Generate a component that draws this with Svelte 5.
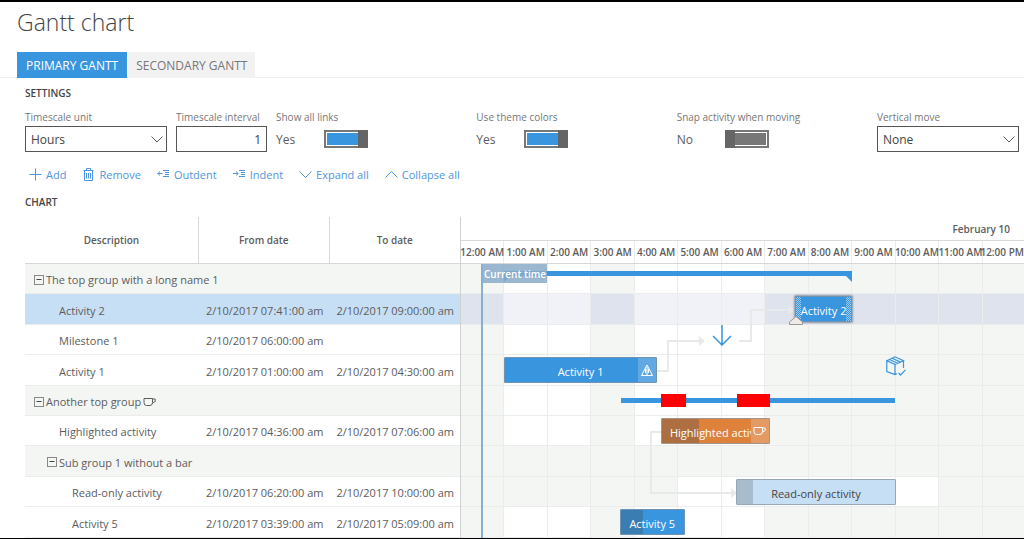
<script lang="ts">
  interface Row {
    name: string;
    level: number;
    group?: boolean;
    selected?: boolean;
    cup?: boolean;
    from?: string;
    to?: string;
    // working hours of the row, as [start, end] pairs
    open: number[][];
  }

  interface Bar {
    row: number;
    from: number;
    to: number;
    label: string;
    kind?: string;
    progress?: number;
    icon?: string;
    selected?: boolean;
  }

  const VISIBLE_HOURS = 12.95;
  const ROW_HEIGHT = 30.4;
  const normal = [[1, 3], [4, 7]];

  const rows: Row[] = [
    { name: 'The top group with a long name 1', level: 0, group: true, open: normal },
    { name: 'Activity 2', level: 1, selected: true, from: '2/10/2017 07:41:00 am', to: '2/10/2017 09:00:00 am', open: normal },
    { name: 'Milestone 1', level: 1, from: '2/10/2017 06:00:00 am', open: normal },
    { name: 'Activity 1', level: 1, from: '2/10/2017 01:00:00 am', to: '2/10/2017 04:30:00 am', open: normal },
    { name: 'Another top group', level: 0, group: true, cup: true, open: normal },
    { name: 'Highlighted activity', level: 1, from: '2/10/2017 04:36:00 am', to: '2/10/2017 07:06:00 am', open: normal },
    { name: 'Sub group 1 without a bar', level: 1, group: true, open: [] },
    { name: 'Read-only activity', level: 2, from: '2/10/2017 06:20:00 am', to: '2/10/2017 10:00:00 am', open: [[5, 11]] },
    { name: 'Activity 5', level: 2, from: '2/10/2017 03:39:00 am', to: '2/10/2017 05:09:00 am', open: normal }
  ];

  const bars: Bar[] = [
    { row: 1, from: 7.68, to: 9, label: 'Activity 2', selected: true },
    { row: 3, from: 1, to: 4.5, label: 'Activity 1', icon: 'warning' },
    { row: 5, from: 4.6, to: 7.1, label: 'Highlighted activity', kind: 'highlighted', progress: 35, icon: 'cup' },
    { row: 7, from: 6.33, to: 10, label: 'Read-only activity', kind: 'readonly', progress: 10 },
    { row: 8, from: 3.65, to: 5.15, label: 'Activity 5', progress: 35 }
  ];

  const hours = [
    '12:00 AM', '1:00 AM', '2:00 AM', '3:00 AM', '4:00 AM', '5:00 AM', '6:00 AM',
    '7:00 AM', '8:00 AM', '9:00 AM', '10:00 AM', '11:00 AM', '12:00 PM'
  ];

  const actions = [
    { icon: 'add', label: 'Add' },
    { icon: 'remove', label: 'Remove' },
    { icon: 'outdent', label: 'Outdent' },
    { icon: 'indent', label: 'Indent' },
    { icon: 'down', label: 'Expand all' },
    { icon: 'up', label: 'Collapse all' }
  ];

  let unit = $state('Hours');
  let interval = $state('1');
  let showLinks = $state(true);
  let themeColors = $state(true);
  let snap = $state(false);
  let verticalMove = $state('None');

  const rowTop = (i: number) => Math.round(i * ROW_HEIGHT);
  const rowHeight = (i: number) => rowTop(i + 1) - rowTop(i);
  const pct = (h: number) => `${(h / VISIBLE_HOURS) * 100}%`;
  const isOpen = (row: Row, h: number) => row.open.some(([a, b]) => h >= a && h < b);
</script>

{#snippet cupIcon()}
  <svg class="cup" viewBox="0 0 13 10" width="13" height="10" aria-hidden="true">
    <path d="M1 1.500h8.500v4Q9.500 8.500 7 8.500H3.500Q1 8.500 1 5.500zM9.500 2h2.700v2.500L9.500 6" />
  </svg>
{/snippet}

{#snippet chevron()}
  <svg class="chevron" viewBox="0 0 12 7" width="12" height="7" aria-hidden="true">
    <path d="M0.500 0.500l5.500 5.500l5.500-5.500" />
  </svg>
{/snippet}

{#snippet switchField(id: string, label: string, checked: boolean, toggle: () => void)}
  <div class="field">
    <label for={id}>{label}</label>
    <div class="switch-row">
      <span>{checked ? 'Yes' : 'No'}</span>
      <input {id} class="switch" type="checkbox" role="switch" {checked} onchange={toggle} />
    </div>
  </div>
{/snippet}

<main class="page">
  <h1>Gantt chart</h1>

  <div class="tabs" role="tablist">
    <button class="tab active" role="tab" aria-selected="true">PRIMARY GANTT</button>
    <button class="tab" role="tab" aria-selected="false">SECONDARY GANTT</button>
  </div>

  <section class="content">
    <h2>SETTINGS</h2>
    <div class="settings">
      <div class="field">
        <label for="unit">Timescale unit</label>
        <div class="select-box">
          <select id="unit" bind:value={unit}>
            <option>Hours</option>
            <option>Days</option>
          </select>
          {@render chevron()}
        </div>
      </div>
      <div class="field">
        <label for="interval">Timescale interval</label>
        <input id="interval" class="number" type="text" bind:value={interval} />
      </div>
      {@render switchField('links', 'Show all links', showLinks, () => (showLinks = !showLinks))}
      {@render switchField('theme', 'Use theme colors', themeColors, () => (themeColors = !themeColors))}
      {@render switchField('snap', 'Snap activity when moving', snap, () => (snap = !snap))}
      <div class="field">
        <label for="vertical">Vertical move</label>
        <div class="select-box">
          <select id="vertical" bind:value={verticalMove}>
            <option>None</option>
            <option>Any</option>
          </select>
          {@render chevron()}
        </div>
      </div>
    </div>

    <div class="toolbar">
      {#each actions as action}
        <button>
          <svg viewBox="0 0 13 13" width="13" height="13" aria-hidden="true">
            {#if action.icon === 'add'}
              <path d="M6.500 0.500v12M0.500 6.500h12" />
            {:else if action.icon === 'remove'}
              <path d="M1.500 2.500h10M4.500 2.500v-2h4v2M2.500 2.500v10h8v-10M4.500 5v5.500M6.500 5v5.500M8.500 5v5.500" />
            {:else if action.icon === 'outdent'}
              <path d="M0.500 5.500h5M3 3.500L0.800 5.500L3 7.500M6 2.500h6M8 4.500h4M8 6.500h4M6 8.500h6" />
            {:else if action.icon === 'indent'}
              <path d="M0 5.500h5M3 3.500l2.200 2L3 7.500M6 2.500h6M8 4.500h4M8 6.500h4M6 8.500h6" />
            {:else if action.icon === 'down'}
              <path d="M0.500 3.500l6 6l6-6" />
            {:else}
              <path d="M0.500 9.500l6-6l6 6" />
            {/if}
          </svg>
          {action.label}
        </button>
      {/each}
    </div>

    <h2>CHART</h2>
  </section>

  <div class="chart">
    <table>
      <thead>
        <tr>
          <th class="description">Description</th>
          <th class="date">From date</th>
          <th class="date">To date</th>
        </tr>
      </thead>
      <tbody>
        {#each rows as row, i}
          <tr class:group={row.group} class:selected={row.selected} style="height: {rowHeight(i)}px">
            <td>
              <div class="name" style="padding-left: {9 + row.level * 13}px">
                {#if row.group}
                  <button class="collapse" aria-label="Collapse {row.name}">
                    <svg viewBox="0 0 10 10" width="10" height="10" aria-hidden="true">
                      <rect x="0.500" y="0.500" width="9" height="9" />
                      <path d="M2.500 4.500h5" />
                    </svg>
                  </button>
                {:else}
                  <span class="spacer"></span>
                {/if}
                <span>{row.name}</span>
                {#if row.cup}{@render cupIcon()}{/if}
              </div>
            </td>
            <td class="when">{row.from ?? ''}</td>
            <td class="when">{row.to ?? ''}</td>
          </tr>
        {/each}
      </tbody>
    </table>

    <div class="timeline">
      <div class="day">February 10</div>
      <div class="hours">
        {#each hours as hour}
          <div class="hour" style="width: {pct(1)}"><span>{hour}</span></div>
        {/each}
      </div>

      <div class="canvas">
        {#each rows as row, i}
          <div class="lane" class:selected={row.selected} style="height: {rowHeight(i)}px">
            {#each hours as _, h}
              <div class="cell" class:open={isOpen(row, h)} style="width: {pct(1)}"></div>
            {/each}
          </div>
        {/each}

        {#if showLinks}
          <svg class="links" width="100%" height="100%" aria-hidden="true">
            <line x1={pct(4.5)} x2={pct(4.76)} y1="107" y2="107" />
            <line x1={pct(4.76)} x2={pct(4.76)} y1="108" y2="76" />
            <line x1={pct(4.76)} x2={pct(5.5)} y1="77" y2="77" />
            <svg x={pct(5.47)} y="72" overflow="visible"><path d="M0 0l6 5l-6 5z" /></svg>

            <line x1={pct(6.4)} x2={pct(6.67)} y1="77" y2="77" />
            <line x1={pct(6.67)} x2={pct(6.67)} y1="78" y2="45" />
            <line x1={pct(6.67)} x2={pct(7.6)} y1="46" y2="46" />
            <svg x={pct(7.53)} y="41" overflow="visible"><path d="M0 0l6 5l-6 5z" /></svg>

            <line x1={pct(4.6)} x2={pct(4.37)} y1="168" y2="168" />
            <line x1={pct(4.37)} x2={pct(4.37)} y1="167" y2="230" />
            <line x1={pct(4.37)} x2={pct(6.25)} y1="229" y2="229" />
            <svg x={pct(6.21)} y="224" overflow="visible"><path d="M0 0l6 5l-6 5z" /></svg>
          </svg>
        {/if}

        <div class="summary first" style="left: {pct(1)}; width: {pct(8)}; top: 7px"></div>
        <div class="summary" style="left: {pct(3.68)}; width: {pct(6.3)}; top: {rowTop(4) + 12}px"></div>
        <div class="overload" style="left: {pct(4.6)}; width: {pct(0.57)}; top: {rowTop(4) + 8}px"></div>
        <div class="overload" style="left: {pct(6.34)}; width: {pct(0.76)}; top: {rowTop(4) + 8}px"></div>

        {#each bars as bar}
          <div
            class="bar {bar.kind ?? ''}"
            class:picked={bar.selected}
            style="left: {pct(bar.from)}; width: {pct(bar.to - bar.from)}; top: {rowTop(bar.row) + 2}px"
          >
            {#if bar.progress}
              <div class="progress" style="width: {bar.progress}%"></div>
            {/if}
            <span class="bar-label">{bar.label}</span>
            {#if bar.icon}
              <div class="badge">
                {#if bar.icon === 'cup'}
                  {@render cupIcon()}
                {:else}
                  <svg viewBox="0 0 12 12" width="12" height="12" aria-hidden="true">
                    <path d="M6 1L11.500 11.500H0.500zM6 3v8.500M4.500 5v4M7.500 5v4" />
                  </svg>
                {/if}
              </div>
            {/if}
          </div>
        {/each}

        <svg class="marker handle" style="left: {pct(7.7)}; top: 52px" viewBox="0 0 14 9" width="14" height="9" aria-hidden="true">
          <path d="M7 0.500L0.500 6v2.500h13V6z" />
        </svg>
        <svg class="marker" style="left: {pct(6)}; top: {rowTop(2)}px" viewBox="0 0 20 21" width="20" height="21" aria-hidden="true">
          <path d="M10 0v20M1 11l9 9l9-9" />
        </svg>
        <svg class="marker package" style="left: {pct(10)}; top: {rowTop(3) + 1}px" viewBox="0 0 20 20" width="20" height="20" aria-hidden="true">
          <path d="M9 18.500V8.500L0.800 4.800V15.500L9 18.500L11 17.700M0.800 4.800L9 0.800L17.500 4.800L9 8.500M17.500 4.800V12M3.500 3.500L11.800 7.300M6.200 2.200L14.500 6.100M12.500 16.800L14.500 19L19.500 13.800" />
        </svg>

        <div class="now" style="left: {pct(0.46)}"><span>Current time</span></div>
      </div>
    </div>
  </div>
</main>

<style>
  :global(body) {
    margin: 0;
    background: #fff;
  }

  .page {
    --blue: #3895de;
    --line: #ebecec;
    --shade: #f4f6f4;
    border-top: 2px solid #000;
    border-bottom: 1px solid #000;
    font-family: 'Open Sans', 'Noto Sans', sans-serif;
    font-size: 11px;
    color: #5c5c5c;
    overflow: hidden;
  }

  .page * {
    box-sizing: border-box;
  }

  button,
  input,
  select {
    margin: 0;
    font-family: inherit;
    border-radius: 0;
  }

  svg path,
  svg rect {
    fill: none;
    stroke: currentColor;
  }

  h1 {
    margin: 0;
    padding: 4px 17px 14px;
    font-size: 23px;
    line-height: 32px;
    font-weight: 300;
    color: #444;
  }

  .tabs {
    display: flex;
    gap: 1px;
    padding-left: 17px;
    height: 26px;
    border-bottom: 1px solid #eee;
  }

  .tab {
    height: 26px;
    padding: 0 8px;
    border: 0;
    background: #f2f2f2;
    color: #777;
    font-size: 12px;
    white-space: nowrap;
  }

  .tab.active {
    padding: 0 9px;
    background: var(--blue);
    color: #fff;
  }

  .content {
    padding: 7px 5px 7px 25px;
  }

  h2 {
    margin: 0;
    font-size: 10px;
    line-height: 16px;
    font-weight: 600;
    color: #444;
  }

  .settings {
    display: grid;
    grid-template-columns: 142px 91px 1fr 1fr 1fr 142px;
    gap: 9px;
    margin-top: 8px;
  }

  .field {
    display: flex;
    flex-direction: column;
    gap: 1px;
  }

  .field label {
    font-size: 10px;
    line-height: 16px;
    color: #777;
    white-space: nowrap;
  }

  .select-box {
    display: grid;
    align-items: center;
  }

  .select-box > * {
    grid-area: 1 / 1;
  }

  select,
  .number {
    width: 100%;
    height: 26px;
    padding: 0 5px;
    border: 1px solid #555;
    background: #fff;
    color: #444;
    font-size: 12px;
    appearance: none;
  }

  .number {
    text-align: right;
  }

  .chevron {
    justify-self: end;
    margin-right: 4px;
    pointer-events: none;
  }

  .switch-row {
    display: flex;
    align-items: center;
    height: 26px;
    font-size: 12px;
  }

  .switch-row span {
    width: 48px;
  }

  .switch {
    width: 44px;
    height: 18px;
    padding: 1px;
    border: 2px solid #777;
    appearance: none;
    background: #777 content-box;
    display: flex;
  }

  .switch::before {
    content: '';
    width: 10px;
    height: 18px;
    margin: -3px;
    background: #656565;
  }

  .switch:checked {
    justify-content: flex-end;
    background-color: var(--blue);
  }

  .toolbar {
    display: flex;
    gap: 16px;
    padding-left: 4px;
    margin: 11px 0 9px;
  }

  .toolbar button {
    display: flex;
    align-items: center;
    gap: 4px;
    height: 22px;
    padding: 0;
    border: 0;
    background: none;
    color: #5095dc;
    font-size: 11px;
    white-space: nowrap;
  }

  .chart {
    display: flex;
    padding-left: 25px;
  }

  table {
    flex: none;
    width: 435px;
    table-layout: fixed;
    border-spacing: 0;
  }

  th {
    height: 47px;
    padding: 0;
    font-size: 10px;
    font-weight: 600;
    border-right: 1px solid #d9d9d9;
    border-bottom: 1px solid #d5d8d6;
  }

  th:last-child {
    border-right: 0;
  }

  .description {
    width: 174px;
  }

  td {
    padding: 2px 0 0;
    border-bottom: 1px solid var(--line);
    white-space: nowrap;
  }

  .group td {
    background: var(--shade);
  }

  .selected td {
    background: #c7dff4;
  }

  .when {
    padding-right: 6px;
    text-align: right;
  }

  .name {
    display: flex;
    align-items: center;
    gap: 2px;
  }

  .collapse {
    display: flex;
    width: 10px;
    height: 10px;
    padding: 0;
    border: 0;
    background: none;
    color: #444;
  }

  .collapse rect {
    stroke: #888;
  }

  .spacer {
    width: 10px;
  }

  .cup {
    flex: none;
  }

  .timeline {
    flex: 1;
    min-width: 0;
    overflow: hidden;
    border-left: 1px solid #d0d2d1;
  }

  .day {
    height: 24px;
    padding-right: 14px;
    border-bottom: 1px solid #d9d9d9;
    line-height: 24px;
    font-size: 10px;
    font-weight: 600;
    text-align: right;
  }

  .hours {
    display: flex;
    height: 23px;
    border-bottom: 1px solid #d5d8d6;
  }

  .hour {
    flex: none;
    display: flex;
    align-items: center;
    justify-content: center;
    border-right: 1px solid var(--line);
    font-size: 10px;
    font-weight: 600;
    white-space: nowrap;
  }

  .hour:last-child {
    flex: 1;
    min-width: 0;
    justify-content: flex-end;
    border-right: 0;
  }

  .canvas {
    position: relative;
  }

  .lane {
    display: flex;
  }

  .cell {
    flex: none;
    border-right: 1px solid var(--line);
    border-bottom: 1px solid var(--line);
    background: var(--shade);
  }

  .cell.open {
    background: #fff;
  }

  .lane.selected .cell {
    background: #dfe3ed;
  }

  .lane.selected .cell.open {
    background: #f0f2f7;
  }

  .links {
    position: absolute;
    inset: 0;
  }

  .links line {
    stroke: #e8e9e9;
    stroke-width: 2;
  }

  .links path {
    stroke: none;
    fill: #e8e9e9;
  }

  .summary {
    position: absolute;
    height: 5px;
    background: var(--blue);
  }

  .summary.first::before,
  .summary.first::after {
    content: '';
    position: absolute;
    top: 5px;
    left: 0;
    border-top: 6px solid var(--blue);
    border-right: 6px solid transparent;
  }

  .summary.first::after {
    left: auto;
    right: 0;
    border-right: 0;
    border-left: 6px solid transparent;
  }

  .overload {
    position: absolute;
    height: 13px;
    background: #f00;
  }

  .bar {
    position: absolute;
    display: flex;
    align-items: center;
    justify-content: center;
    height: 26px;
    padding-top: 2px;
    border: 1px solid #6f93b3;
    border-radius: 1px;
    background: var(--blue);
    color: #fff;
    white-space: nowrap;
    overflow: hidden;
  }

  .bar-label {
    position: relative;
  }

  .progress {
    position: absolute;
    inset: 0 auto 0 0;
    background: rgba(60, 70, 80, 0.3);
  }

  .badge {
    position: absolute;
    inset: 0 0 0 auto;
    width: 18px;
    display: flex;
    align-items: center;
    justify-content: center;
    background: #62a9e4;
  }

  .highlighted {
    justify-content: flex-start;
    padding-left: 8px;
    border-color: #a3948a;
    background: #de813b;
  }

  .highlighted .badge {
    background: #e39a64;
  }

  .readonly {
    border-color: #98a7b4;
    background: #c7dff4;
    color: #444;
  }

  .readonly .progress {
    background: #a9bccc;
  }

  .picked {
    box-shadow: 0 0 2px 1px #8b98a8;
  }

  .picked::before,
  .picked::after {
    content: '';
    position: absolute;
    inset: 0 auto 0 0;
    width: 5px;
    background: repeating-conic-gradient(#9cc9ee 0 25%, transparent 0 50%) 0 0 / 2px 2px;
  }

  .picked::after {
    inset: 0 0 0 auto;
  }

  .marker {
    position: absolute;
    transform: translateX(-50%);
    color: var(--blue);
  }

  .marker path {
    stroke-width: 1.5;
  }

  .package path {
    stroke-width: 1.2;
  }

  .handle path {
    fill: #eeebe6;
    stroke: #999;
    stroke-width: 1;
  }

  .now {
    position: absolute;
    top: 0;
    bottom: 0;
    border-left: 2px solid #86b0d2;
  }

  .now span {
    display: block;
    width: 64px;
    height: 19px;
    line-height: 20px;
    background: rgba(138, 171, 200, 0.85);
    color: #fff;
    font-weight: 600;
    font-size: 10px;
    text-align: center;
    white-space: nowrap;
  }
</style>
